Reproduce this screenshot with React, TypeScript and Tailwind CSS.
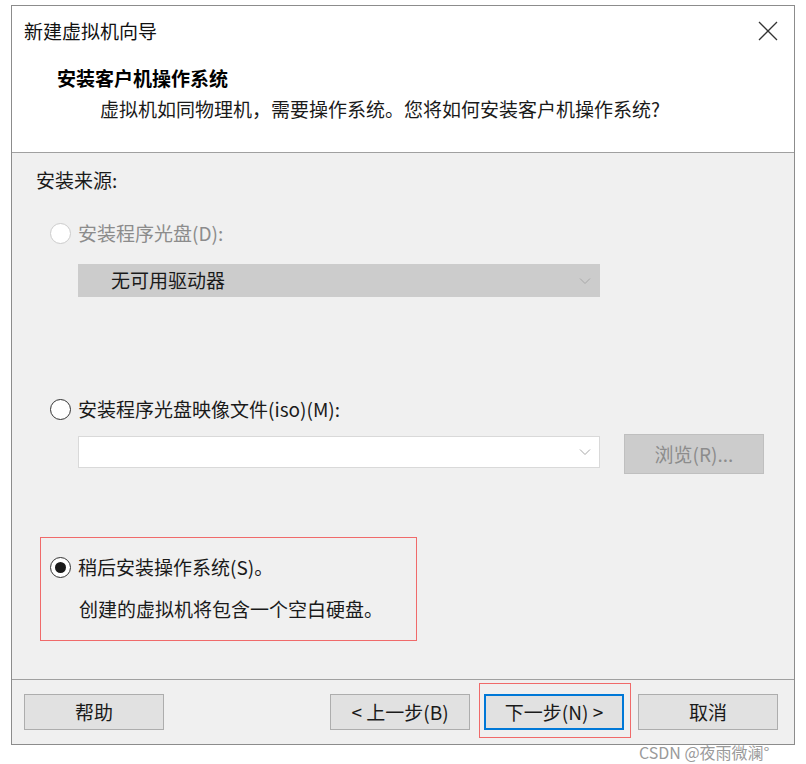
import React from "react";

const font = { fontFamily: '"Noto Sans CJK SC", "Noto Sans", sans-serif' };

const Radio = ({ checked = false, disabled = false }: { checked?: boolean; disabled?: boolean }) => (
  <span
    className={`flex h-[21px] w-[21px] shrink-0 items-center justify-center rounded-full border bg-white ${
      disabled ? "border-[#cccccc]" : "border-[#333333]"
    }`}
  >
    {checked && <span className="h-[11px] w-[11px] rounded-full bg-[#1a1a1a]" />}
  </span>
);

const Chevron = ({ color }: { color: string }) => (
  <svg width="12" height="8" viewBox="0 0 12 8" fill="none">
    <path d="M1 1.5 L6 6.5 L11 1.5" stroke={color} strokeWidth="1" />
  </svg>
);

const Btn = ({ children, primary = false }: { children: React.ReactNode; primary?: boolean }) => (
  <div
    className={`flex h-[36px] w-[140px] items-center justify-center bg-[#e1e1e1] text-[19px] text-[#1a1a1a] ${
      primary ? "border-2 border-[#0078d7]" : "border border-[#adadad]"
    }`}
  >
    {children}
  </div>
);

export default function App() {
  return (
    <div className="relative h-[764px] w-[806px] bg-white" style={font}>
      <div className="ml-[11px] mt-[5px] flex w-[784px] flex-col border border-[#8c8c8c]">
        {/* header */}
        <div className="h-[147px] border-b border-[#a0a0a0] bg-white">
          <div className="flex h-[50px] items-center justify-between pl-[12px] pr-[16px]">
            <span className="text-[19px] text-[#111]">新建虚拟机向导</span>
            <svg width="20" height="20" viewBox="0 0 20 20" fill="none">
              <path d="M1 1 L19 19 M19 1 L1 19" stroke="#333" strokeWidth="1.3" />
            </svg>
          </div>
          <div className="ml-[45px] mt-[8px] text-[19px] font-bold leading-[28px] text-black">安装客户机操作系统</div>
          <div className="ml-[88px] mt-[3px] text-[19px] leading-[28px] text-[#1a1a1a]">
            虚拟机如同物理机，需要操作系统。您将如何安装客户机操作系统?
          </div>
        </div>

        {/* body */}
        <div className="flex h-[526px] flex-col bg-[#f0f0f0] pl-[24px]">
          <div className="mt-[15px] flex h-[24px] items-center text-[19px] text-[#1a1a1a]">安装来源:</div>

          <div className="mt-[29px] ml-[14px] flex h-[24px] items-center gap-[7px] text-[19px] text-[#8c8c8c]">
            <Radio disabled />
            <span>安装程序光盘(D):</span>
          </div>

          <div className="ml-[42px] mt-[19px] flex h-[33px] w-[522px] items-center justify-between bg-[#cccccc] pl-[33px] pr-[9px]">
            <span className="text-[19px] text-[#1a1a1a]">无可用驱动器</span>
            <Chevron color="#a8a8a8" />
          </div>

          <div className="mt-[100px] ml-[14px] flex h-[24px] items-center gap-[7px] text-[19px] text-[#1a1a1a]">
            <Radio />
            <span>安装程序光盘映像文件(iso)(M):</span>
          </div>

          <div className="mt-[13px] flex h-[40px] items-start">
            <div className="ml-[42px] mt-[2px] flex h-[32px] w-[522px] items-center justify-end border border-[#d9d9d9] bg-white pr-[8px]">
              <Chevron color="#a8a8a8" />
            </div>
            <div className="ml-[24px] flex h-[40px] w-[140px] items-center justify-center border border-[#bfbfbf] bg-[#cccccc] text-[19px] text-[#8c8c8c]">
              浏览(R)...
            </div>
          </div>

          <div className="ml-[4px] mt-[63px] flex h-[104px] w-[377px] flex-col border border-[#f06a6a] pl-[9px]">
            <div className="mt-[17px] flex h-[24px] items-center gap-[7px] text-[19px] text-[#1a1a1a]">
              <Radio checked />
              <span>稍后安装操作系统(S)。</span>
            </div>
            <div className="mt-[18px] ml-[29px] flex h-[24px] items-center text-[19px] text-[#1a1a1a]">
              创建的虚拟机将包含一个空白硬盘。
            </div>
          </div>
        </div>

        {/* footer */}
        <div className="flex h-[65px] items-start border-t border-[#a0a0a0] bg-[#f0f0f0] pl-[12px] pt-[14px]">
          <Btn>帮助</Btn>
          <div className="ml-[166px] flex gap-[14px]">
            <Btn>&lt; 上一步(B)</Btn>
            <div className="relative">
              <Btn primary>下一步(N) &gt;</Btn>
              <div className="pointer-events-none absolute -left-[5px] -top-[11px] h-[55px] w-[152px] border border-[#f06a6a]" />
            </div>
            <Btn>取消</Btn>
          </div>
        </div>
      </div>

      <div className="absolute left-[639px] top-[736px] text-[16px] leading-[22px] text-[#9a9a9a]">CSDN @夜雨微澜°</div>
    </div>
  );
}
